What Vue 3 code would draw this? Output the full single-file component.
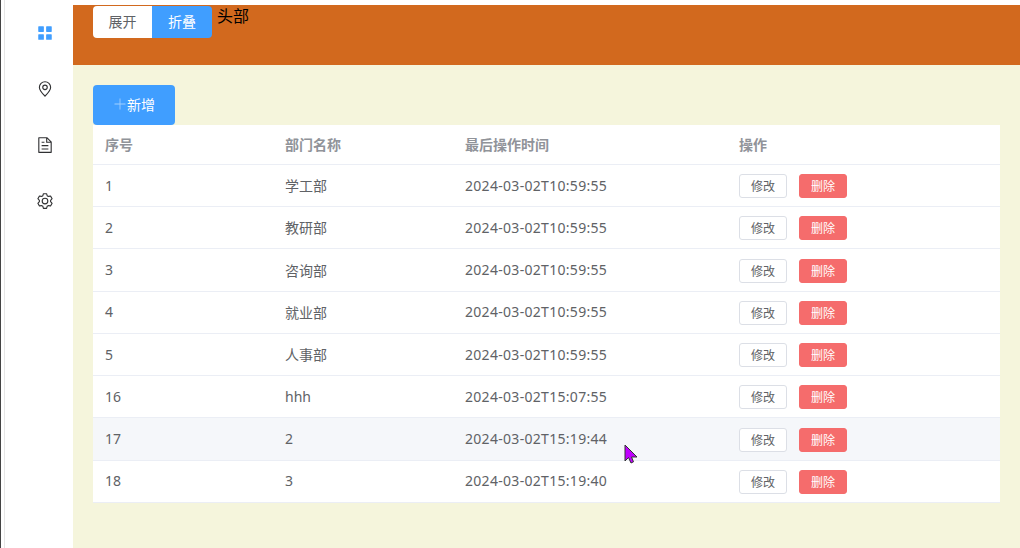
<script setup>
const rows = [
  ['1', '学工部', '2024-03-02T10:59:55'],
  ['2', '教研部', '2024-03-02T10:59:55'],
  ['3', '咨询部', '2024-03-02T10:59:55'],
  ['4', '就业部', '2024-03-02T10:59:55'],
  ['5', '人事部', '2024-03-02T10:59:55'],
  ['16', 'hhh', '2024-03-02T15:07:55'],
  ['17', '2', '2024-03-02T15:19:44'],
  ['18', '3', '2024-03-02T15:19:40'],
]
</script>

<template>
  <div class="page">
    <aside class="side">
      <div class="mi active">
        <svg viewBox="0 0 1024 1024" class="ic"><path fill="currentColor" d="M160 448a32 32 0 0 1-32-32V160.064a32 32 0 0 1 32-32h256a32 32 0 0 1 32 32V416a32 32 0 0 1-32 32H160zm448 0a32 32 0 0 1-32-32V160.064a32 32 0 0 1 32-32h255.936a32 32 0 0 1 32 32V416a32 32 0 0 1-32 32H608zM160 896a32 32 0 0 1-32-32V608a32 32 0 0 1 32-32h256a32 32 0 0 1 32 32v256a32 32 0 0 1-32 32H160zm448 0a32 32 0 0 1-32-32V608a32 32 0 0 1 32-32h255.936a32 32 0 0 1 32 32v256a32 32 0 0 1-32 32H608z"/></svg>
      </div>
      <div class="mi">
        <svg viewBox="0 0 1024 1024" class="ic"><path fill="currentColor" d="M800 416a288 288 0 1 0-576 0c0 118.144 94.528 272.128 288 456.576C705.472 688.128 800 534.144 800 416zM512 960C277.312 746.688 160 565.312 160 416a352 352 0 0 1 704 0c0 149.312-117.312 330.688-352 544z"/><path fill="currentColor" d="M512 512a96 96 0 1 0 0-192 96 96 0 0 0 0 192zm0 64a160 160 0 1 1 0-320 160 160 0 0 1 0 320z"/></svg>
      </div>
      <div class="mi">
        <svg viewBox="0 0 1024 1024" class="ic"><path fill="currentColor" d="M832 384H576V128H192v768h640V384zm-26.496-64L640 154.496V320h165.504zM160 64h480l256 256v608a32 32 0 0 1-32 32H160a32 32 0 0 1-32-32V96a32 32 0 0 1 32-32zm160 448h384v64H320v-64zm0-192h160v64H320v-64zm0 384h384v64H320v-64z"/></svg>
      </div>
      <div class="mi">
        <svg viewBox="0 0 1024 1024" class="ic"><path fill="currentColor" d="M600.704 64a32 32 0 0 1 30.464 22.208l35.2 109.376c14.784 7.232 28.928 15.36 42.432 24.512l112.384-24.192a32 32 0 0 1 34.432 15.36L944.32 364.8a32 32 0 0 1-4.032 37.504l-77.12 85.12a357.12 357.12 0 0 1 0 49.024l77.12 85.248a32 32 0 0 1 4.032 37.504l-88.704 153.6a32 32 0 0 1-34.432 15.296L708.8 803.904c-13.44 9.088-27.648 17.28-42.368 24.512l-35.264 109.376A32 32 0 0 1 600.704 960H423.296a32 32 0 0 1-30.464-22.208L357.696 828.48a351.616 351.616 0 0 1-42.56-24.64l-112.32 24.256a32 32 0 0 1-34.432-15.36L79.68 659.2a32 32 0 0 1 4.032-37.504l77.12-85.248a357.12 357.12 0 0 1 0-48.896l-77.12-85.248A32 32 0 0 1 79.68 364.8l88.704-153.6a32 32 0 0 1 34.432-15.296l112.32 24.256c13.568-9.152 27.776-17.408 42.56-24.64l35.2-109.312A32 32 0 0 1 423.232 64H600.64zm-23.424 64H446.72l-36.352 113.088-24.512 11.968a294.113 294.113 0 0 0-34.816 20.096l-22.656 15.36-116.224-25.088-65.28 113.152 79.68 88.192-1.92 27.136a293.12 293.12 0 0 0 0 40.192l1.92 27.136-79.808 88.192 65.344 113.152 116.224-25.024 22.656 15.296a294.113 294.113 0 0 0 34.816 20.096l24.512 11.968L446.72 896h130.688l36.48-113.152 24.448-11.904a288.282 288.282 0 0 0 34.752-20.096l22.592-15.296 116.288 25.024 65.28-113.152-79.744-88.192 1.92-27.136a293.12 293.12 0 0 0 0-40.256l-1.92-27.136 79.808-88.128-65.344-113.152-116.288 24.96-22.592-15.232a287.616 287.616 0 0 0-34.752-20.096l-24.448-11.904L577.344 128zM512 320a192 192 0 1 1 0 384 192 192 0 0 1 0-384zm0 64a128 128 0 1 0 0 256 128 128 0 0 0 0-256z"/></svg>
      </div>
    </aside>
    <div class="main">
      <header class="head">
        <div class="seg">
          <button class="sb sb-l">展开</button>
          <button class="sb sb-r">折叠</button>
        </div>
        <span class="title">头部</span>
      </header>
      <section class="content">
        <button class="add">
          <svg viewBox="0 0 1024 1024" class="plus"><path fill="currentColor" d="M480 480V128a32 32 0 0 1 64 0v352h352a32 32 0 0 1 0 64H544v352a32 32 0 0 1-64 0V544H128a32 32 0 0 1 0-64h352z"/></svg>
          <span>新增</span>
        </button>
        <div class="table">
          <div class="tr th">
            <div class="c c1">序号</div>
            <div class="c c2">部门名称</div>
            <div class="c c3">最后操作时间</div>
            <div class="c c4">操作</div>
          </div>
          <div v-for="(r, i) in rows" :key="r[0]" class="tr td" :class="{ hover: i === 6 }">
            <div class="c c1 txt">{{ r[0] }}</div>
            <div class="c c2 txt">{{ r[1] }}</div>
            <div class="c c3 txt time">{{ r[2] }}</div>
            <div class="c c4 ops">
              <button class="b edit">修改</button>
              <button class="b del">删除</button>
            </div>
          </div>
        </div>
      </section>
    </div>
    <svg class="cursor" width="16" height="20" viewBox="0 0 16 20"><path d="M1 1 L1 17 L4.5 13.5 L7 19 L9.5 17.8 L7.5 13 L13 13 Z" fill="#c000ff" stroke="#333" stroke-width="1"/></svg>
  </div>
</template>

<style>
html, body { margin: 0; background: #fff; }
</style>

<style scoped>
.page {
  position: relative;
  display: flex;
  width: 1020px;
  height: 548px;
  overflow: hidden;
  background: #fff;
  font-family: "Noto Sans", "Noto Sans CJK SC", sans-serif;
  font-size: 14px;
  color: #606266;
}
.side {
  flex: none;
  box-sizing: border-box;
  width: 73px;
  padding-top: 5px;
  border-left: 1px solid #444;
  box-shadow: inset 3px 0 0 #fff, inset 4px 0 0 #e6e6e6;
}
.mi {
  height: 56px;
  display: flex;
  align-items: center;
  padding-left: 35px;
  color: #303133;
}
.mi.active { color: #409eff; }
.ic { width: 18px; height: 18px; }
.main {
  flex: 1;
  min-width: 0;
  padding-top: 5px;
  display: flex;
  flex-direction: column;
}
.head {
  flex: none;
  height: 60px;
  background: #d2691e;
  padding-left: 20px;
  display: flex;
  align-items: flex-start;
  color: #000;
}
.seg { display: flex; margin-top: 1px; }
.sb {
  height: 32px;
  padding: 0;
  border: 0;
  font: inherit;
  font-size: 14px;
  line-height: 32px;
}
.sb-l { width: 59px; background: #fff; color: #606266; border-radius: 4px 0 0 4px; }
.sb-r { width: 60px; background: #409eff; color: #fff; border-radius: 0 4px 4px 0; }
.title { margin-left: 5px; font-size: 16px; line-height: 22px; }
.content {
  flex: 1;
  background: #f5f5dc;
  padding: 20px 20px 0;
}
.add {
  display: flex;
  align-items: center;
  justify-content: center;
  width: 82px;
  height: 40px;
  padding: 0 0 2px;
  border: 0;
  border-radius: 4px;
  background: #409eff;
  color: #fff;
  font: inherit;
}
.plus { width: 14px; height: 14px; color: #a0cfff; }
.table { background: #fff; }
.tr { display: flex; box-sizing: border-box; border-bottom: 1px solid #ebeef5; }
.th { height: 39.9px; font-weight: 700; color: #909399; }
.td { height: 42.25px; }
.td.hover { background: #f5f7fa; }
.c { box-sizing: border-box; padding-left: 12px; display: flex; align-items: center; }
.c1, .c2 { width: 180px; }
.c3 { width: 274px; }
.c4 { flex: 1; }
.txt { padding-bottom: 0.6px; }
.time { letter-spacing: 0.3px; }
.ops { padding-top: 1.2px; }
.b {
  box-sizing: border-box;
  width: 48px;
  height: 24px;
  padding: 0;
  border-radius: 3px;
  font: inherit;
  font-size: 12px;
}
.edit { border: 1px solid #dcdfe6; background: #fff; color: #606266; }
.del { border: 1px solid #f56c6c; background: #f56c6c; color: #fff; margin-left: 12px; }
.cursor { position: absolute; left: 624px; top: 444px; }
</style>
